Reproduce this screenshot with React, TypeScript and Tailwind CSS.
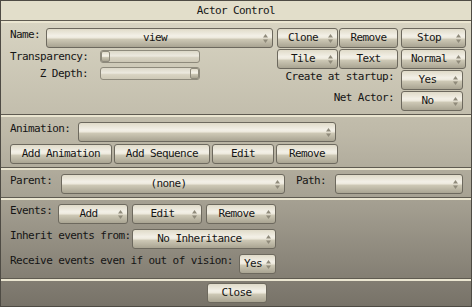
import { ReactNode } from "react";

const gloss =
  "bg-[linear-gradient(180deg,#e0dbc9_0%,#f3f0e7_38%,#ece8db_50%,#cec9b6_56%,#a9a492_100%)]";

function Arrows() {
  return (
    <svg width="5" height="9" viewBox="0 0 5 9" className="mr-[4px] shrink-0">
      <path d="M2.5 0 L5 3.5 L0 3.5 Z" fill="#8f8a7a" />
      <path d="M0 5.5 L5 5.5 L2.5 9 Z" fill="#8f8a7a" />
    </svg>
  );
}

interface BtnProps {
  children?: ReactNode;
  arrow?: boolean;
  className?: string;
}

function Btn({ children, arrow, className }: BtnProps) {
  return (
    <div
      className={`h-[20px] shrink-0 flex items-center rounded-[3px] border border-[#6d695e] ${gloss} ${className ?? ""}`}
    >
      <span className="flex-1 text-center leading-[14px] whitespace-nowrap overflow-hidden">
        {children}
      </span>
      {arrow && <Arrows />}
    </div>
  );
}

function Slider({ right }: { right?: boolean }) {
  return (
    <div
      className={`w-[100px] h-[13px] flex rounded-[3px] border border-[#8e8a7c] bg-[linear-gradient(180deg,#dcd8c8_0%,#ece9df_45%,#d8d3c2_60%,#cdc8b6_100%)] ${right ? "justify-end" : "justify-start"}`}
    >
      <div className={`w-[9px] h-full rounded-[2px] border border-[#8e8a7c] ${gloss}`} />
    </div>
  );
}

function Label({ children, className }: { children: ReactNode; className?: string }) {
  return (
    <div className={`leading-[14px] whitespace-nowrap shrink-0 ${className ?? ""}`}>
      {children}
    </div>
  );
}

const section = "border-t-2 border-t-[#ebe6d1] border-b border-b-[#5f5b51]";

export default function App() {
  return (
    <div className="w-[472px] h-[307px] border border-[#4e4b44] text-[#151515] font-['DejaVu_Sans_Mono',monospace] text-[11px] tracking-[-0.6px] flex flex-col overflow-hidden">
      <div className="h-[20px] shrink-0 bg-[#e2deca] border-b border-[#5f5b51] flex items-center justify-center leading-[14px]">
        Actor Control
      </div>

      <div className="flex-1 flex flex-col bg-[linear-gradient(180deg,#d8d4c2_0%,#bfbaa9_38%,#a39e90_65%,#777268_100%)]">
        {/* actor */}
        <div className={`${section} h-[94px] shrink-0 flex pl-[9px] pt-[5px]`}>
          <div className="flex flex-col w-[263px]">
            <div className="flex">
              <Label className="w-[36px]">Name:</Label>
              <Btn arrow className="w-[227px]">view</Btn>
            </div>
            <div className="flex mt-[2px]">
              <Label className="w-[78px] text-right mr-[12px]">Transparency:</Label>
              <Slider />
            </div>
            <div className="flex mt-[3px]">
              <Label className="w-[78px] text-right mr-[12px]">Z Depth:</Label>
              <Slider right />
            </div>
          </div>
          <div className="flex flex-col ml-[4px] w-[189px]">
            <div className="flex">
              <Btn arrow className="w-[61px]">Clone</Btn>
              <Btn className="w-[59px] ml-[1px]">Remove</Btn>
              <Btn arrow className="w-[65px] ml-[3px]">Stop</Btn>
            </div>
            <div className="flex mt-[1px]">
              <Btn arrow className="w-[61px]">Tile</Btn>
              <Btn className="w-[59px] ml-[1px]">Text</Btn>
              <Btn arrow className="w-[65px] ml-[3px]">Normal</Btn>
            </div>
            <div className="flex justify-end pr-[3px] mt-[1px]">
              <Label className="mr-[7px]">Create at startup:</Label>
              <Btn arrow className="w-[62px]">Yes</Btn>
            </div>
            <div className="flex justify-end pr-[3px] mt-[1px]">
              <Label className="mr-[7px]">Net Actor:</Label>
              <Btn arrow className="w-[62px]">No</Btn>
            </div>
          </div>
        </div>

        {/* animation */}
        <div className={`${section} h-[53px] shrink-0 flex flex-col pl-[9px] pt-[5px]`}>
          <div className="flex">
            <Label className="w-[68px]">Animation:</Label>
            <Btn arrow className="w-[258px]" />
          </div>
          <div className="flex mt-[2px]">
            <Btn className="w-[102px]">Add Animation</Btn>
            <Btn className="w-[96px] ml-[2px]">Add Sequence</Btn>
            <Btn className="w-[62px] ml-[2px]">Edit</Btn>
            <Btn className="w-[62px] ml-[2px]">Remove</Btn>
          </div>
        </div>

        {/* parent / path */}
        <div className={`${section} h-[30px] shrink-0 flex pl-[9px] pt-[4px]`}>
          <Label className="w-[51px]">Parent:</Label>
          <Btn arrow className="w-[224px]">(none)</Btn>
          <Label className="w-[39px] ml-[11px]">Path:</Label>
          <Btn arrow className="w-[128px]" />
        </div>

        {/* events */}
        <div className={`${section} h-[81px] shrink-0 flex flex-col pl-[9px] pt-[4px]`}>
          <div className="flex">
            <Label className="w-[48px]">Events:</Label>
            <Btn arrow className="w-[70px]">Add</Btn>
            <Btn arrow className="w-[70px] ml-[4px]">Edit</Btn>
            <Btn arrow className="w-[70px] ml-[4px]">Remove</Btn>
          </div>
          <div className="flex mt-[5px]">
            <Label className="w-[122px]">Inherit events from:</Label>
            <Btn arrow className="w-[144px]">No Inheritance</Btn>
          </div>
          <div className="flex mt-[5px]">
            <Label className="w-[229px]">Receive events even if out of vision:</Label>
            <Btn arrow className="w-[37px]">Yes</Btn>
          </div>
        </div>

        {/* close */}
        <div className="border-t-2 border-t-[#ebe6d1] flex-1 flex justify-center pt-[2px] pl-[1px]">
          <Btn className="w-[60px]">Close</Btn>
        </div>
      </div>
    </div>
  );
}
